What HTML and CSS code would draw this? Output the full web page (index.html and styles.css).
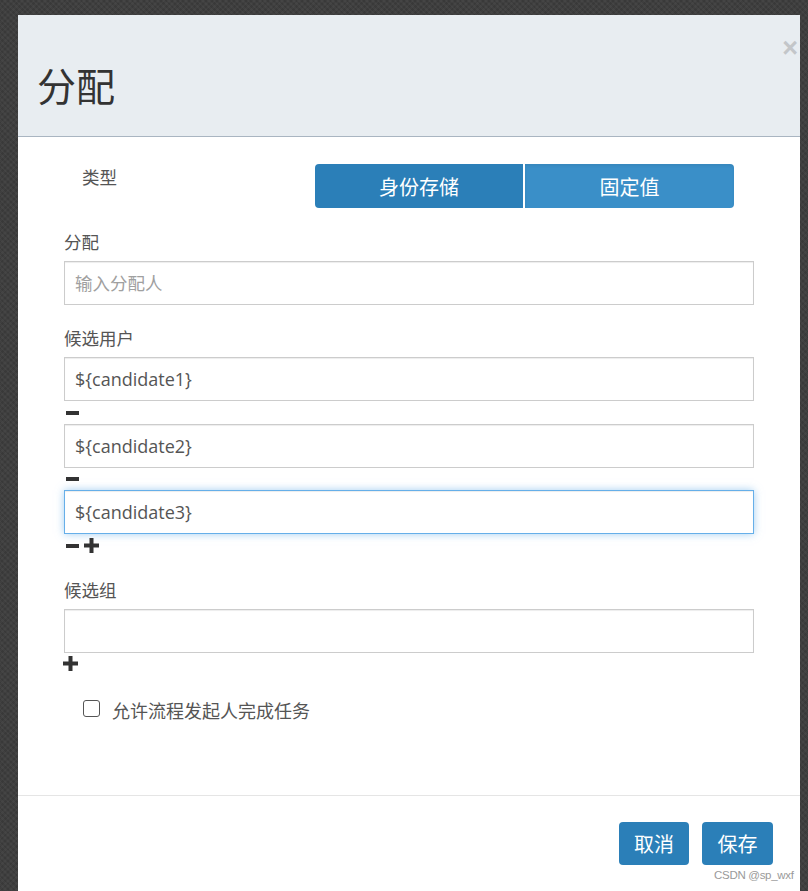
FILE: index.html
```html
<!DOCTYPE html>
<html lang="zh-CN">
<head>
<meta charset="utf-8">
<title>分配</title>
<link rel="stylesheet" href="styles.css">
</head>
<body>
<div class="modal">
  <div class="modal-header">
    <h2 class="modal-title">分配</h2>
    <span class="close">×</span>
  </div>
  <div class="modal-body">
    <div class="type-row">
      <div class="type-label">类型</div>
      <div class="toggle">
        <button class="tbtn active">身份存储</button>
        <button class="tbtn">固定值</button>
      </div>
    </div>

    <div class="group">
      <label class="lbl">分配</label>
      <input class="form-control" placeholder="输入分配人">
    </div>

    <div class="group">
      <label class="lbl">候选用户</label>
      <input class="form-control" value="${candidate1}">
      <div class="icons">
        <svg class="ico-minus" width="13" height="4" viewBox="0 0 13 4"><rect width="13" height="4" fill="#333"/></svg>
      </div>
      <input class="form-control" value="${candidate2}">
      <div class="icons">
        <svg class="ico-minus" width="13" height="4" viewBox="0 0 13 4"><rect width="13" height="4" fill="#333"/></svg>
      </div>
      <input class="form-control focused" value="${candidate3}">
      <div class="icons">
        <svg class="ico-minus" width="13" height="4" viewBox="0 0 13 4"><rect width="13" height="4" fill="#333"/></svg>
        <svg class="ico-plus" width="15" height="15" viewBox="0 0 15 15"><rect x="5.5" y="0" width="4" height="15" fill="#333"/><rect x="0" y="5.5" width="15" height="4" fill="#333"/></svg>
      </div>
    </div>

    <div class="group">
      <label class="lbl">候选组</label>
      <input class="form-control" value="">
      <div class="icons first-plus">
        <svg class="ico-plus" width="15" height="15" viewBox="0 0 15 15"><rect x="5.5" y="0" width="4" height="15" fill="#333"/><rect x="0" y="5.5" width="15" height="4" fill="#333"/></svg>
      </div>
    </div>

    <div class="check-row">
      <span class="checkbox"></span>
      <span class="check-text">允许流程发起人完成任务</span>
    </div>
  </div>
  <div class="modal-footer">
    <button class="fbtn">取消</button>
    <button class="fbtn">保存</button>
  </div>
</div>
<div class="watermark">CSDN @sp_wxf</div>
</body>
</html>
```

FILE: styles.css
```css
html, body {
  margin: 0;
  padding: 0;
  height: 100%;
  overflow: hidden;
}

body {
  background-color: #3d3d3d;
  background-image:
    repeating-linear-gradient(45deg, rgba(255,255,255,0.025) 0 2px, rgba(0,0,0,0.03) 2px 4px),
    repeating-linear-gradient(-45deg, rgba(255,255,255,0.02) 0 2px, rgba(0,0,0,0.03) 2px 4px);
  font-family: "Noto Sans CJK SC", "Noto Sans", sans-serif;
  padding: 15px 8px 0 18px;
  box-sizing: border-box;
  position: relative;
}

.modal {
  width: 782px;
  height: 876px;
  background: #fff;
  display: flex;
  flex-direction: column;
}

.modal-header {
  height: 121px;
  background: #e8edf1;
  border-bottom: 1px solid #a9b5c1;
  display: flex;
  justify-content: space-between;
  align-items: flex-start;
  padding-left: 19px;
  flex: none;
}

.modal-title {
  margin: 46px 0 0 0;
  font-size: 39px;
  line-height: 46px;
  font-weight: normal;
  color: #333;
}

.close {
  font-family: "Liberation Sans", Arial, sans-serif;
  font-size: 27px;
  line-height: 26px;
  font-weight: bold;
  color: #c3c6c9;
  margin: 20px 2px 0 0;
}

.modal-body {
  padding: 27px 46px 76px 46px;
  flex: none;
}

.type-row {
  display: flex;
  align-items: flex-start;
}

.type-label {
  width: 233px;
  padding-left: 18px;
  padding-top: 2px;
  font-size: 17.5px;
  line-height: 22px;
  color: #555;
}

.toggle {
  display: grid;
  grid-template-columns: 208px 209px;
  gap: 2px;
}

.tbtn {
  height: 44px;
  border: none;
  margin: 0;
  padding: 0;
  background: #3a8fc8;
  color: #fff;
  font-family: "Noto Sans CJK SC", sans-serif;
  font-size: 20px;
  box-shadow: inset 0 2px 3px rgba(0,0,0,0.06);
}

.tbtn:first-child {
  border-radius: 4px 0 0 4px;
}

.tbtn:last-child {
  border-radius: 0 4px 4px 0;
}

.tbtn.active {
  background: #2b7fb8;
  box-shadow: none;
}

.group {
  margin-top: 23px;
  display: flex;
  flex-direction: column;
}

.group + .group {
  margin-top: 22px;
}

.lbl {
  font-size: 17.5px;
  line-height: 22px;
  color: #555;
  margin-bottom: 8px;
}

.form-control {
  box-sizing: border-box;
  width: 690px;
  height: 44px;
  margin: 0;
  padding: 0 10px;
  border: 1px solid #ccc;
  border-radius: 0;
  box-shadow: inset 0 1px 1px rgba(0,0,0,0.075);
  font-family: "Open Sans", "Noto Sans CJK SC", sans-serif;
  font-size: 18px;
  color: #555;
  outline: none;
  background: #fff;
}

.form-control::placeholder {
  font-family: "Noto Sans CJK SC", sans-serif;
  font-size: 17.5px;
  color: #a0a0a0;
}

.form-control.focused {
  border-color: #66afe9;
  box-shadow: inset 0 1px 1px rgba(0,0,0,0.075), 0 0 8px rgba(102,175,233,0.6);
}

.icons {
  height: 22.5px;
  display: flex;
  align-items: center;
  gap: 5px;
  padding-left: 2px;
  padding-top: 1px;
  box-sizing: border-box;
}

.icons.first-plus {
  padding-left: 0;
  margin-left: -1px;
  padding-top: 0;
}

.ico-minus, .ico-plus {
  display: block;
  flex: none;
}

.check-row {
  margin-top: 22px;
  height: 22px;
  display: flex;
  align-items: center;
  padding-left: 19px;
}

.checkbox {
  width: 17px;
  height: 17px;
  box-sizing: border-box;
  border: 1.5px solid #555;
  border-radius: 3px;
  background: #fff;
  flex: none;
}

.check-text {
  margin-left: 12px;
  font-size: 18px;
  line-height: 22px;
  color: #555;
  padding-top: 3px;
}

.modal-footer {
  flex: 1;
  border-top: 1px solid #e5e5e5;
  display: flex;
  justify-content: flex-end;
  align-items: flex-start;
  gap: 13px;
  padding: 26px 27px 0 0;
}

.fbtn {
  width: 70px;
  height: 43px;
  border: none;
  border-radius: 4px;
  background: #2b7fb8;
  color: #fff;
  font-family: "Noto Sans CJK SC", sans-serif;
  font-size: 20px;
  padding: 0;
}

.fbtn:last-child {
  width: 71px;
}

.watermark {
  position: absolute;
  left: 714px;
  top: 868px;
  white-space: nowrap;
  font-family: "Liberation Sans", Arial, sans-serif;
  font-size: 11.5px;
  line-height: 14px;
  color: #9a9a9a;
  letter-spacing: -0.3px;
}
```
